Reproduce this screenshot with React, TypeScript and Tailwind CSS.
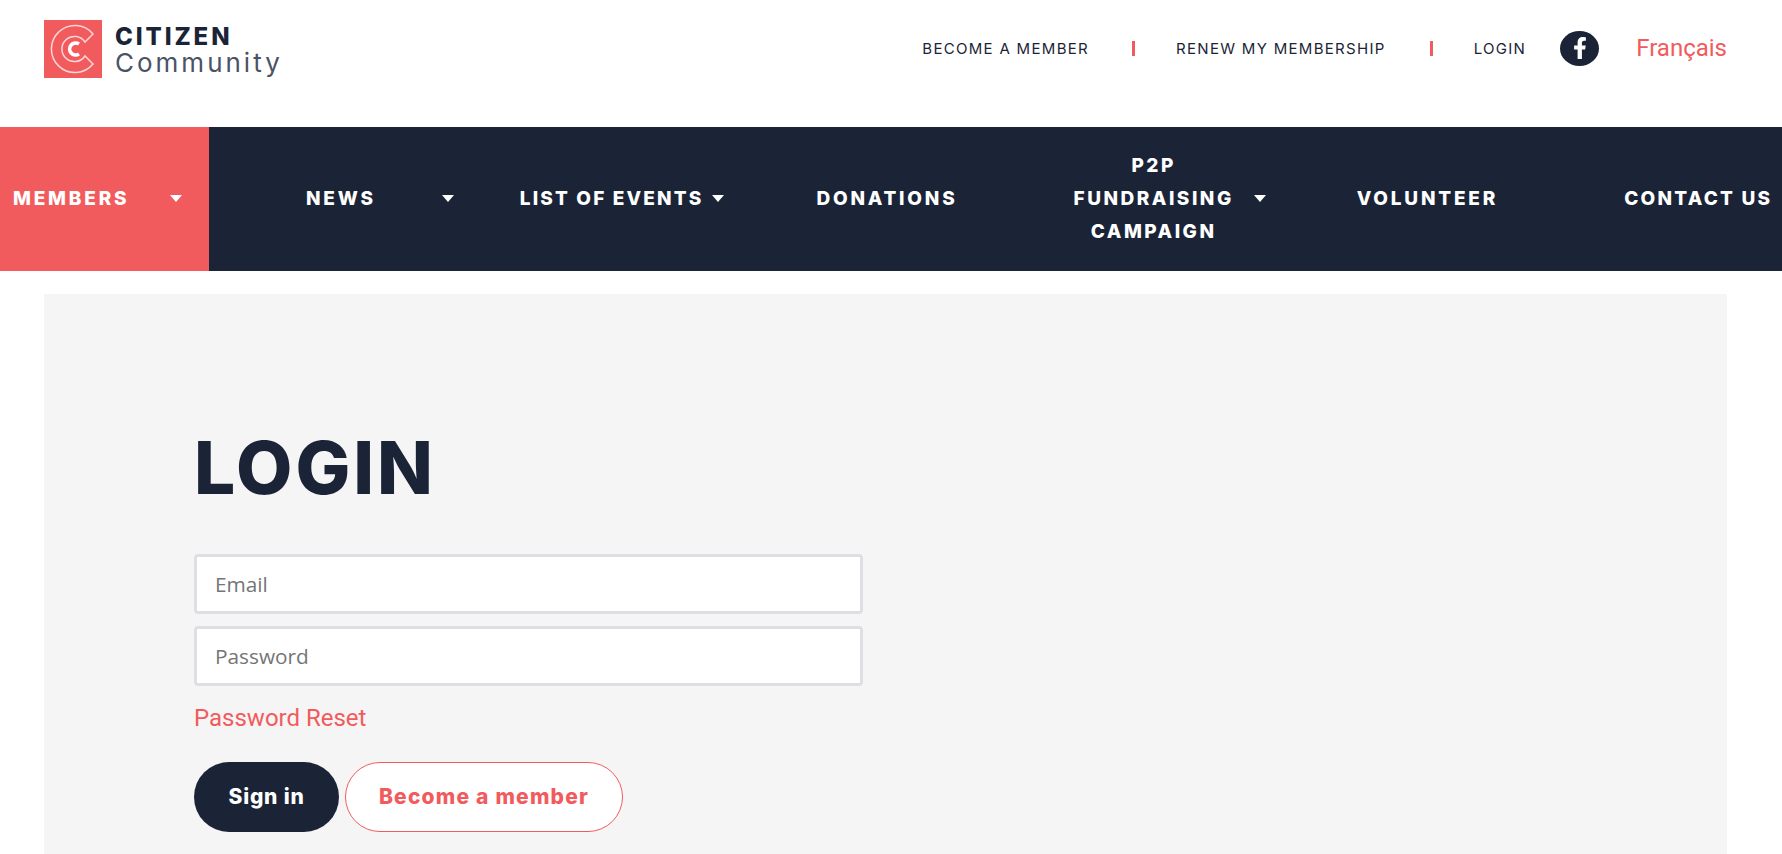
const Caret = () => (
  <svg width="12" height="7" viewBox="0 0 12 7" className="shrink-0 -translate-y-px">
    <path d="M0 0h12L6 7z" fill="#fff" />
  </svg>
);

const Logo = () => (
  <svg width="58" height="58" viewBox="0 0 58 58" className="shrink-0">
    <rect width="58" height="58" fill="#f25b5d" />
    <path d="M49 14A23.5 23.5 0 1 0 49 44L41 36A12.6 12.6 0 1 1 41 22Z" fill="none" stroke="#fff" strokeOpacity="0.75" strokeWidth="1.5" />
    <path d="M35 24A6 6 0 1 0 35 34" fill="none" stroke="#fff" strokeWidth="3.6" />
  </svg>
);

const TopLink = ({ children, className }: { children: string; className: string }) => (
  <a className={`font-['Inter',sans-serif] text-[15px] tracking-[1.3px] whitespace-nowrap text-[#1b2437] translate-y-px ${className}`}>{children}</a>
);

const Separator = ({ className }: { className: string }) => <span className={`block w-[3px] h-[15px] bg-[#f25b5d] ${className}`} />;

const NavLabel = ({ children, className = 'tracking-[2.8px]' }: { children: string; className?: string }) => (
  <span className={`text-[19px] font-extrabold leading-[33px] text-white text-center whitespace-nowrap -translate-y-px ${className}`}>{children}</span>
);

export default function App() {
  return (
    <div className="h-screen overflow-hidden bg-white font-['Inter',sans-serif]">
      {/* Top bar */}
      <header className="h-[127px] flex pl-[44px]">
        <div className="flex items-start pt-[20px]">
          <Logo />
          <div className="ml-[13px] mt-[5px]">
            <div className="text-[24px] leading-[24px] font-extrabold tracking-[2.9px] text-[#1b2437]">CITIZEN</div>
            <div className="text-[26px] leading-[28px] tracking-[3px] text-[#4a5366]">Community</div>
          </div>
        </div>
        <div className="flex items-center h-[96px] ml-auto">
          <TopLink className="mr-[43px]">BECOME A MEMBER</TopLink>
          <Separator className="mr-[41px]" />
          <TopLink className="mr-[44px]">RENEW MY MEMBERSHIP</TopLink>
          <Separator className="mr-[41px]" />
          <TopLink className="mr-[34px]">LOGIN</TopLink>
          <a className="w-[39px] h-[35px] rounded-[50%] bg-[#1b2437] flex items-center justify-center mr-[37px]">
            <svg width="14" height="22" viewBox="0 0 320 512" fill="#fff">
              <path d="M279.14 288l14.22-92.66h-88.91v-60.13c0-25.35 12.42-50.06 52.24-50.06h40.42V6.26S260.43 0 225.36 0c-73.22 0-121.08 44.38-121.08 124.72v70.62H22.89V288h81.39v224h100.17V288z" />
            </svg>
          </a>
          <a className="font-['Roboto',sans-serif] text-[24px] text-[#f25b5d] mr-[55px]">Français</a>
        </div>
      </header>

      {/* Main nav */}
      <nav className="h-[144px] bg-[#1b2437] flex items-center">
        <div className="w-[209px] h-full bg-[#f25b5d] flex items-center pl-[13px]">
          <NavLabel>MEMBERS</NavLabel>
          <span className="ml-[41px]"><Caret /></span>
        </div>
        <div className="flex items-center ml-[97px]">
          <NavLabel>NEWS</NavLabel>
          <span className="ml-[66px]"><Caret /></span>
        </div>
        <div className="flex items-center ml-[66px]">
          <NavLabel className="tracking-[2.15px]">LIST OF EVENTS</NavLabel>
          <span className="ml-[9px]"><Caret /></span>
        </div>
        <div className="flex items-center ml-[92px]">
          <NavLabel>DONATIONS</NavLabel>
        </div>
        <div className="flex items-center ml-[116px]">
          <div className="flex flex-col items-center">
            <NavLabel className="tracking-[2.5px]">P2P</NavLabel>
            <NavLabel className="tracking-[2.5px]">FUNDRAISING</NavLabel>
            <NavLabel className="tracking-[2.5px]">CAMPAIGN</NavLabel>
          </div>
          <span className="ml-[20px]"><Caret /></span>
        </div>
        <div className="flex items-center ml-[91px]">
          <NavLabel>VOLUNTEER</NavLabel>
        </div>
        <div className="flex items-center ml-[126px]">
          <NavLabel className="tracking-[2.25px]">CONTACT US</NavLabel>
        </div>
      </nav>

      {/* Login panel */}
      <main className="mt-[23px] ml-[44px] w-[1683px] h-[600px] bg-[#f5f5f5] pl-[150px] pt-[130px]">
        <h1 className="text-[73px] leading-[88px] font-extrabold tracking-[2.9px] text-[#1b2437]">LOGIN</h1>
        <form className="w-[669px] mt-[42px]">
          <input
            placeholder="Email"
            className="block w-full h-[60px] bg-white border-[3px] border-[#dddfe3] rounded-[4px] pl-[18px] font-['Open_Sans',sans-serif] text-[20.8px] placeholder:text-[#757575] outline-none"
          />
          <input
            placeholder="Password"
            className="block w-full h-[60px] mt-[12px] bg-white border-[3px] border-[#dddfe3] rounded-[4px] pl-[18px] font-['Open_Sans',sans-serif] text-[20.8px] placeholder:text-[#757575] outline-none"
          />
          <a className="block mt-[16px] font-['Roboto',sans-serif] text-[24px] leading-[32px] text-[#f25b5d]">Password Reset</a>
          <div className="flex mt-[28px] gap-[6px]">
            <button type="button" className="w-[145px] h-[70px] rounded-[35px] bg-[#1b2437] text-white text-[21px] font-extrabold tracking-[0.8px]">Sign in</button>
            <button type="button" className="w-[278px] h-[70px] rounded-[35px] bg-white border border-[#f25b5d] text-[#f25b5d] text-[21px] font-extrabold tracking-[1.2px]">Become a member</button>
          </div>
        </form>
      </main>
    </div>
  );
}
